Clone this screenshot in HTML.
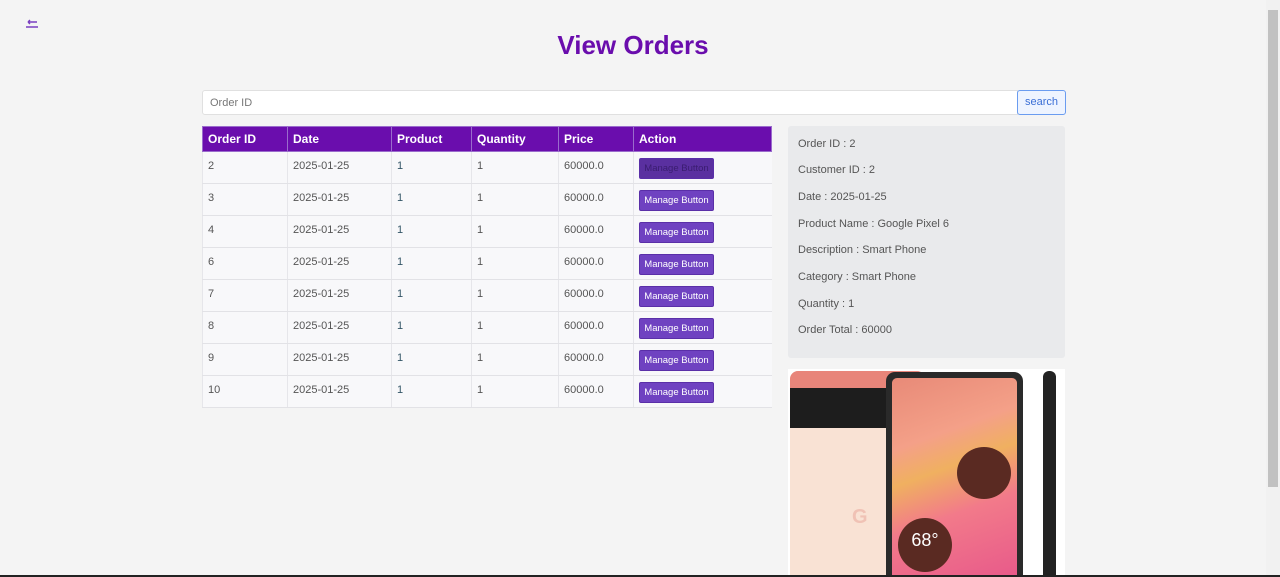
<!DOCTYPE html>
<html><head><style>
body{margin:0;width:1280px;height:577px;background:#f4f4f4;font-family:"Liberation Sans",sans-serif;position:relative;overflow:hidden;color:#555}
.abs{position:absolute}
h1{position:absolute;left:0;width:1266px;top:30px;margin:0;text-align:center;font-size:26px;color:#6a0dad;font-weight:bold}
table{position:absolute;left:202px;top:126px;border-collapse:collapse;width:570px;font-size:11px;table-layout:fixed}
th{background:#6a0dad;color:#fff;text-align:left;padding:0 5px;height:24px;border:1px solid #9a6ccc;font-size:12px}
td{background:#f8f8fa;border-bottom:1px solid #e2e2e6;border-left:1px solid #e6e6ea;height:32px;padding:0 5px;vertical-align:top;padding-top:8px;box-sizing:border-box}
td.b{padding-top:6px}
.btn{display:inline-block;background:#6f42c1;color:#fff;border-radius:2px;padding:4px 2px;font-size:9.5px;border:1px solid #5a2fa8;width:69px;text-align:center;white-space:nowrap;overflow:hidden}
.p{position:absolute;left:798px;font-size:11px;color:#555}
</style></head><body>
<svg class="abs" style="left:25px;top:18px" width="14" height="12"><path d="M3 4H12M3 4L5 2M3 4L5 6M1 9H13" stroke="#7a3fc0" stroke-width="1.4" fill="none"/></svg>
<h1>View Orders</h1>
<div class="abs" style="left:202px;top:90px;width:814px;height:23px;background:#fff;border:1px solid #e0e0e0;border-radius:3px 0 0 3px"><span style="position:absolute;left:7px;top:6px;font-size:11px;color:#777">Order ID</span></div>
<div class="abs" style="left:1017px;top:90px;width:47px;height:23px;background:#eef4ff;border:1px solid #6a9cf0;border-radius:3px;color:#3b6fd6;font-size:11px;text-align:center;line-height:23px">search</div>
<table>
<colgroup><col style="width:85px"><col style="width:104px"><col style="width:80px"><col style="width:87px"><col style="width:75px"><col></colgroup>
<tr><th>Order ID</th><th>Date</th><th>Product</th><th>Quantity</th><th>Price</th><th>Action</th></tr>
<tr><td>2</td><td>2025-01-25</td><td style="color:#356">1</td><td>1</td><td>60000.0</td><td class="b"><span class="btn" style="background:#5a30a0;color:#3a1d70">Manage Button</span></td></tr>
<tr><td>3</td><td>2025-01-25</td><td style="color:#356">1</td><td>1</td><td>60000.0</td><td class="b"><span class="btn">Manage Button</span></td></tr>
<tr><td>4</td><td>2025-01-25</td><td style="color:#356">1</td><td>1</td><td>60000.0</td><td class="b"><span class="btn">Manage Button</span></td></tr>
<tr><td>6</td><td>2025-01-25</td><td style="color:#356">1</td><td>1</td><td>60000.0</td><td class="b"><span class="btn">Manage Button</span></td></tr>
<tr><td>7</td><td>2025-01-25</td><td style="color:#356">1</td><td>1</td><td>60000.0</td><td class="b"><span class="btn">Manage Button</span></td></tr>
<tr><td>8</td><td>2025-01-25</td><td style="color:#356">1</td><td>1</td><td>60000.0</td><td class="b"><span class="btn">Manage Button</span></td></tr>
<tr><td>9</td><td>2025-01-25</td><td style="color:#356">1</td><td>1</td><td>60000.0</td><td class="b"><span class="btn">Manage Button</span></td></tr>
<tr><td>10</td><td>2025-01-25</td><td style="color:#356">1</td><td>1</td><td>60000.0</td><td class="b"><span class="btn">Manage Button</span></td></tr>
</table>
<div class="abs" style="left:788px;top:126px;width:277px;height:232px;background:#e9eaec;border-radius:3px"></div>
<div class="p" style="top:138px">Order ID : 2</div>
<div class="p" style="top:164px">Customer ID : 2</div>
<div class="p" style="top:191px">Date : 2025-01-25</div>
<div class="p" style="top:218px">Product Name : Google Pixel 6</div>
<div class="p" style="top:244px">Description : Smart Phone</div>
<div class="p" style="top:271px">Category : Smart Phone</div>
<div class="p" style="top:298px">Quantity : 1</div>
<div class="p" style="top:324px">Order Total : 60000</div>
<div class="abs" style="left:788px;top:369px;width:277px;height:208px;background:#fff"></div>
<div class="abs" style="left:790px;top:371px;width:135px;height:206px;background:#f9e2d4;border-radius:8px 8px 0 0;overflow:hidden">
<div style="height:17px;background:#e8857a"></div><div style="height:40px;background:#1d1d1d"></div>
<div style="position:absolute;left:62px;top:135px;color:#f0c2b5;font-size:20px;font-weight:bold">G</div></div>
<div class="abs" style="left:886px;top:372px;width:137px;height:205px;background:#2a2a2a;border-radius:9px 9px 0 0"></div>
<div class="abs" style="left:892px;top:378px;width:125px;height:199px;background:linear-gradient(160deg,#e88a78,#f4a088 30%,#f0b060 45%,#f27a8a 65%,#e85a8a);border-radius:5px 5px 0 0"></div>
<div class="abs" style="left:957px;top:447px;width:54px;height:52px;background:#5a2a22;border-radius:50%"></div>
<div class="abs" style="left:898px;top:518px;width:54px;height:54px;background:#5a2a22;border-radius:50%;color:#fff;font-size:18px;text-align:center;line-height:44px">68°</div>
<div class="abs" style="left:1043px;top:371px;width:13px;height:206px;background:#222;border-radius:6px 6px 0 0"></div>
<div class="abs" style="left:1266px;top:0;width:14px;height:577px;background:#f1f1f1"></div>
<div class="abs" style="left:1268px;top:10px;width:10px;height:477px;background:#c1c1c1"></div>
<div class="abs" style="left:0;top:575px;width:1280px;height:2px;background:#222"></div>
</body></html>
